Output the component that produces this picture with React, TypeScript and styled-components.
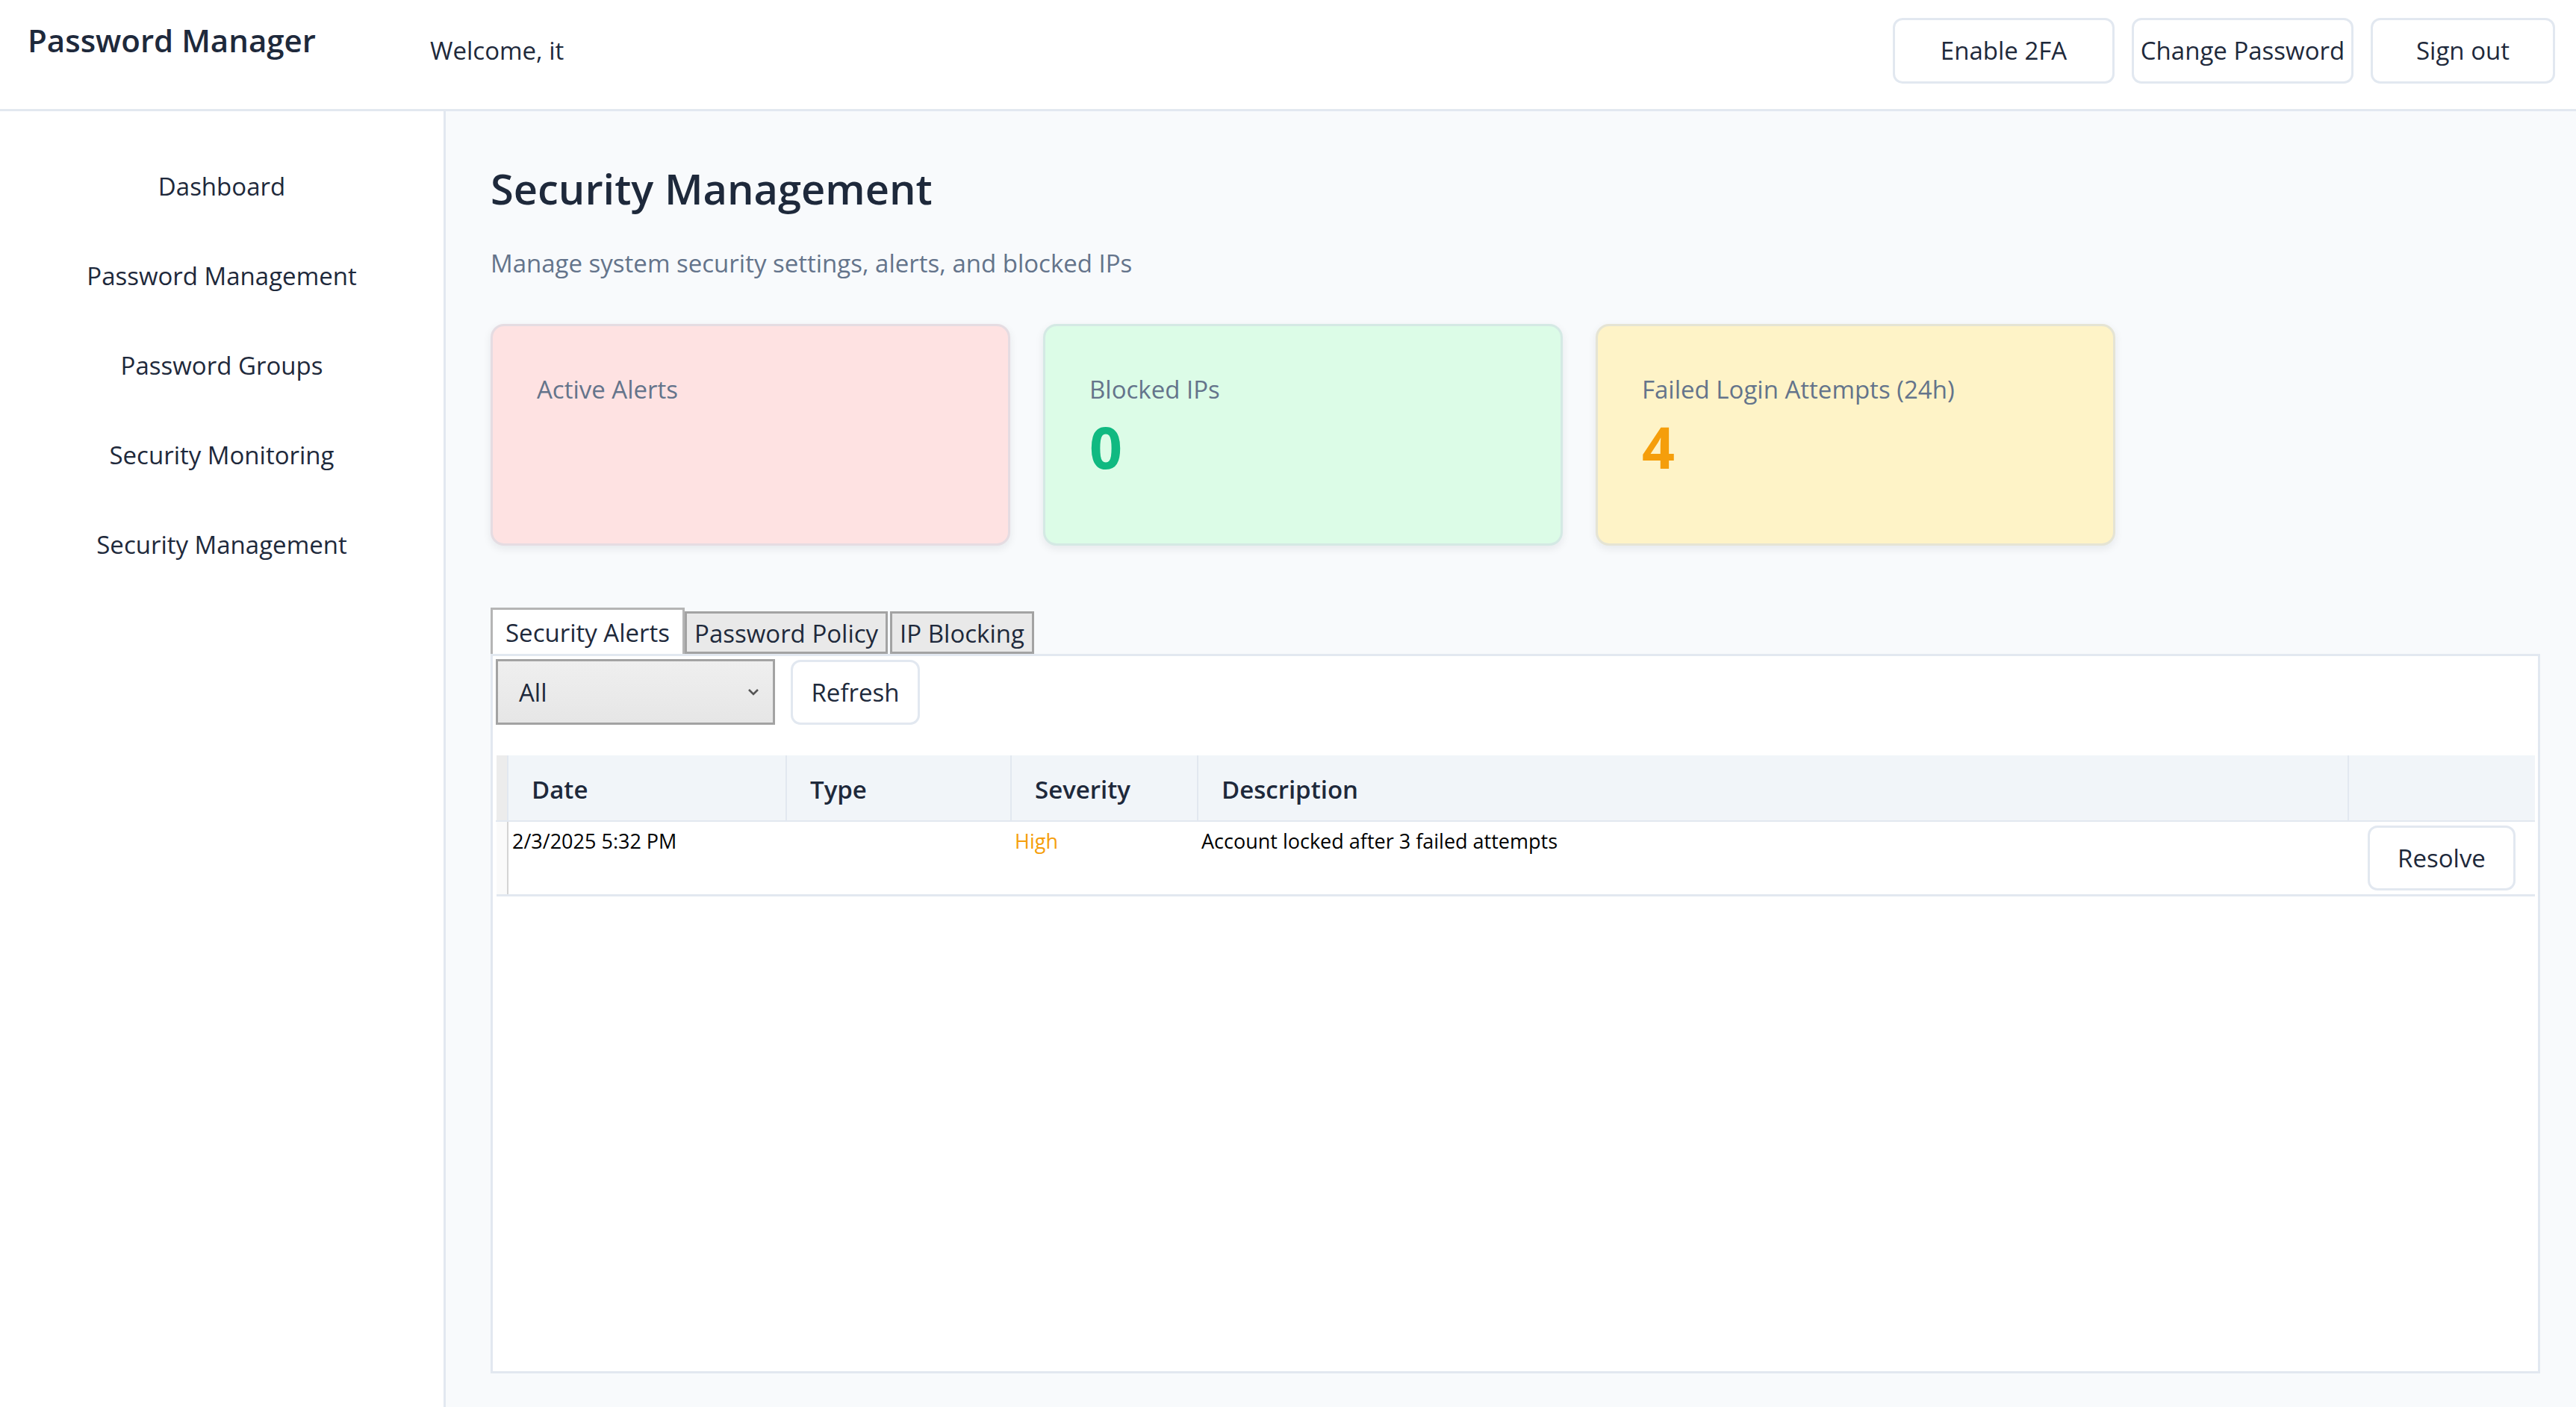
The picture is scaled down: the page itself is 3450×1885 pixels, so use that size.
import React from 'react';
import styled, { createGlobalStyle } from 'styled-components';

const GlobalStyle = createGlobalStyle`
  html, body {
    margin: 0;
    padding: 0;
  }
  body {
    font-family: 'Open Sans', 'Noto Sans', sans-serif;
    color: #1e293b;
    background: #ffffff;
  }
  * {
    box-sizing: border-box;
  }
`;

const Header = styled.header`
  height: 149px;
  display: flex;
  align-items: center;
  padding: 0 28px 11px 37px;
  border-bottom: 3px solid #e2e8f0;
  background: #ffffff;
`;

const Brand = styled.div`
  flex: none;
  width: 539px;
  align-self: flex-start;
  margin-top: 25px;
  font-size: 42px;
  font-weight: 600;
  line-height: normal;
`;

const Welcome = styled.div`
  font-size: 33px;
`;

const HeaderActions = styled.div`
  margin-left: auto;
  display: flex;
  gap: 23px;
`;

const Button = styled.button<{ $width: number; $height?: number }>`
  width: ${p => p.$width}px;
  height: ${p => p.$height || 88}px;
  padding: 0;
  background: #ffffff;
  border: 3px solid #e2e8f0;
  border-radius: 13px;
  font-family: inherit;
  font-size: 33px;
  color: #1e293b;
  white-space: nowrap;
  cursor: pointer;
`;

const Shell = styled.div`
  display: flex;
  min-height: calc(100vh - 149px);
`;

const Sidebar = styled.nav`
  flex: none;
  width: 597px;
  padding-top: 40px;
  border-right: 3px solid #e2e8f0;
  background: #ffffff;
`;

const NavItem = styled.div`
  height: 120px;
  display: flex;
  align-items: center;
  justify-content: center;
  font-size: 33px;
  color: #1e293b;
`;

const Main = styled.main`
  flex: 1;
  display: flex;
  flex-direction: column;
  padding: 65px 48px 45px 60px;
  background: #f8fafc;
`;

const Title = styled.h1`
  margin: 0 0 40px;
  font-size: 56px;
  font-weight: 600;
  line-height: normal;
`;

const Subtitle = styled.p`
  margin: 0 0 59px;
  font-size: 33px;
  line-height: normal;
  color: #64748b;
`;

const Stats = styled.div`
  display: grid;
  grid-template-columns: repeat(3, 696px);
  gap: 44px;
`;

const Card = styled.div<{ $bg: string }>`
  height: 297px;
  padding: 62px 59px;
  background: ${p => p.$bg};
  border: 3px solid rgba(203, 213, 225, 0.5);
  border-radius: 18px;
  box-shadow: 0 4px 12px rgba(15, 23, 42, 0.08);
`;

const CardLabel = styled.div`
  font-size: 33px;
  line-height: normal;
  color: #64748b;
`;

const CardValue = styled.div<{ $color: string }>`
  margin-top: 2px;
  font-size: 77px;
  font-weight: 700;
  line-height: normal;
  color: ${p => p.$color};
`;

const Tabs = styled.div`
  display: flex;
  align-items: flex-end;
  margin-top: 83px;
`;

const Tab = styled.button<{ $active?: boolean }>`
  height: ${p => (p.$active ? 62 : 57)}px;
  padding: ${p => (p.$active ? '2px 17px 0' : '2px 10px 0')};
  margin-right: ${p => (p.$active ? 0 : 3)}px;
  font-family: inherit;
  font-size: 33px;
  color: #1e293b;
  background: ${p => (p.$active ? '#ffffff' : '#e9e9e9')};
  border: 3px solid ${p => (p.$active ? '#b5b5b5' : '#a3a3a3')};
  border-bottom: ${p => (p.$active ? 'none' : '3px solid #a3a3a3')};
  border-radius: 0;
  white-space: nowrap;
`;

const Panel = styled.section`
  flex: 1;
  padding: 4px;
  background: #ffffff;
  border: 3px solid #e2e8f0;
`;

const Filters = styled.div`
  display: flex;
  align-items: center;
  gap: 21px;
  margin-bottom: 41px;
`;

const Select = styled.div`
  position: relative;
  width: 374px;
  height: 88px;
  display: flex;
  align-items: center;
  padding-left: 28px;
  font-size: 33px;
  color: #1e293b;
  background: linear-gradient(#efefef, #e6e6e6);
  border: 3px solid #a3a3a3;

  svg {
    position: absolute;
    right: 18px;
    top: 50%;
    transform: translateY(-50%);
  }
`;

const Table = styled.table`
  width: 100%;
  border-collapse: collapse;
  table-layout: fixed;
`;

const Th = styled.th<{ $strip?: boolean }>`
  height: 88px;
  padding: 3px 0 0 31px;
  text-align: left;
  font-size: 33px;
  font-weight: 600;
  color: #1e293b;
  background: ${p => (p.$strip ? '#ececec' : '#f1f5f9')};
  border-left: 2px solid ${p => (p.$strip ? 'transparent' : '#e2e8f0')};
  border-bottom: 2px solid #e2e8f0;
`;

const Td = styled.td<{ $strip?: boolean; $color?: string; $center?: boolean }>`
  padding: 7px 5px 0;
  vertical-align: ${p => (p.$center ? 'middle' : 'top')};
  text-align: ${p => (p.$center ? 'center' : 'left')};
  font-size: 27px;
  line-height: normal;
  color: ${p => p.$color || '#000000'};
  background: ${p => (p.$strip ? '#fafafa' : '#ffffff')};
  border-right: ${p => (p.$strip ? '2px solid #d4d4d4' : 'none')};
  border-bottom: 3px solid #e2e8f0;
`;

const ActionCell = styled(Td)`
  padding: 5px 0;
`;

const Chevron = () => (
  <svg width="16" height="12" viewBox="0 0 16 12">
    <path d="M2 3 L8 9 L14 3" fill="none" stroke="#555" strokeWidth="2.6" />
  </svg>
);

const navItems = [
  'Dashboard',
  'Password Management',
  'Password Groups',
  'Security Monitoring',
  'Security Management',
];

const alerts = [
  {
    date: '2/3/2025 5:32 PM',
    type: '',
    severity: 'High',
    description: 'Account locked after 3 failed attempts',
  },
];

const App = () => {
  return (
    <>
      <GlobalStyle />
      <Header>
        <Brand>Password Manager</Brand>
        <Welcome>Welcome, it</Welcome>
        <HeaderActions>
          <Button $width={297}>Enable 2FA</Button>
          <Button $width={297}>Change Password</Button>
          <Button $width={247}>Sign out</Button>
        </HeaderActions>
      </Header>
      <Shell>
        <Sidebar>
          {navItems.map(item => (
            <NavItem key={item}>{item}</NavItem>
          ))}
        </Sidebar>
        <Main>
          <Title>Security Management</Title>
          <Subtitle>Manage system security settings, alerts, and blocked IPs</Subtitle>
          <Stats>
            <Card $bg="#fee2e2">
              <CardLabel>Active Alerts</CardLabel>
            </Card>
            <Card $bg="#dcfce7">
              <CardLabel>Blocked IPs</CardLabel>
              <CardValue $color="#10b981">0</CardValue>
            </Card>
            <Card $bg="#fef3c7">
              <CardLabel>Failed Login Attempts (24h)</CardLabel>
              <CardValue $color="#f59e0b">4</CardValue>
            </Card>
          </Stats>

          <Tabs>
            <Tab $active>Security Alerts</Tab>
            <Tab>Password Policy</Tab>
            <Tab>IP Blocking</Tab>
          </Tabs>
          <Panel>
            <Filters>
              <Select>
                All
                <Chevron />
              </Select>
              <Button $width={173} $height={87}>
                Refresh
              </Button>
            </Filters>
            <Table>
              <colgroup>
                <col style={{ width: 15 }} />
                <col style={{ width: 373 }} />
                <col style={{ width: 301 }} />
                <col style={{ width: 250 }} />
                <col />
                <col style={{ width: 250 }} />
              </colgroup>
              <thead>
                <tr>
                  <Th $strip />
                  <Th>Date</Th>
                  <Th>Type</Th>
                  <Th>Severity</Th>
                  <Th>Description</Th>
                  <Th />
                </tr>
              </thead>
              <tbody>
                {alerts.map(alert => (
                  <tr key={alert.date}>
                    <Td $strip />
                    <Td>{alert.date}</Td>
                    <Td>{alert.type}</Td>
                    <Td $color="#f59e0b">{alert.severity}</Td>
                    <Td>{alert.description}</Td>
                    <ActionCell $center>
                      <Button $width={198} $height={87}>
                        Resolve
                      </Button>
                    </ActionCell>
                  </tr>
                ))}
              </tbody>
            </Table>
          </Panel>
        </Main>
      </Shell>
    </>
  );
};

export default App;
